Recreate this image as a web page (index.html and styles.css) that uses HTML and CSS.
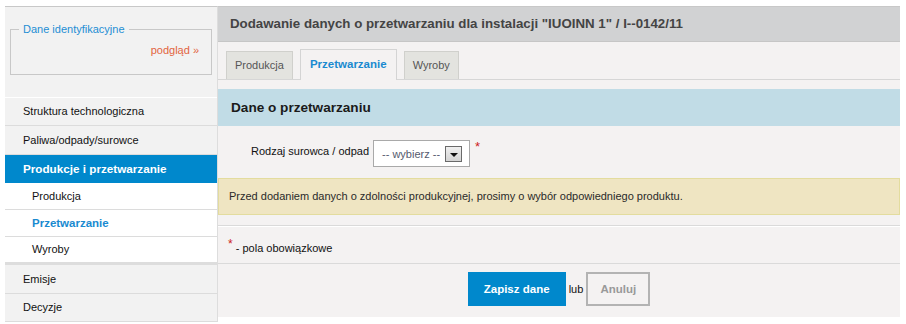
FILE: index.html
```html
<!DOCTYPE html>
<html lang="pl">
<head>
<meta charset="utf-8">
<title>Dodawanie danych o przetwarzaniu</title>
<link rel="stylesheet" href="styles.css">
</head>
<body>
<div class="page">
  <aside class="sidebar">
    <fieldset class="ident">
      <legend>Dane identyfikacyjne</legend>
      <div class="ident-link"><a href="#">podgląd »</a></div>
    </fieldset>
    <ul class="nav">
      <li class="nav-item">Struktura technologiczna</li>
      <li class="nav-item nav-tall">Paliwa/odpady/surowce</li>
      <li class="nav-item nav-active">Produkcje i przetwarzanie</li>
      <li class="nav-sub">Produkcja</li>
      <li class="nav-sub nav-sub-active">Przetwarzanie</li>
      <li class="nav-sub nav-sub-last">Wyroby</li>
      <li class="nav-item nav-tall">Emisje</li>
      <li class="nav-item">Decyzje</li>
    </ul>
  </aside>
  <main class="main">
    <h1 class="title">Dodawanie danych o przetwarzaniu dla instalacji "IUOINN 1" / I--0142/11</h1>
    <div class="tabs">
      <div class="tab">Produkcja</div>
      <div class="tab tab-active">Przetwarzanie</div>
      <div class="tab">Wyroby</div>
    </div>
    <h2 class="section">Dane o przetwarzaniu</h2>
    <div class="form-row">
      <label class="label">Rodzaj surowca / odpad</label>
      <div class="select">
        <span class="select-text">-- wybierz --</span>
        <span class="select-btn"><span class="tri"></span></span>
      </div>
      <span class="req">*</span>
    </div>
    <div class="notice">Przed dodaniem danych o zdolności produkcyjnej, prosimy o wybór odpowiedniego produktu.</div>
    <div class="legend-req"><span class="req-small">*</span> - pola obowiązkowe</div>
    <div class="actions">
      <button class="btn-primary" type="button">Zapisz dane</button>
      <span class="lub">lub</span>
      <button class="btn-cancel" type="button">Anuluj</button>
    </div>
  </main>
</div>
</body>
</html>
```
FILE: styles.css
```css
* { box-sizing: border-box; }
html, body {
  margin: 0;
  padding: 0;
  background: #ffffff;
  font-family: "Liberation Sans", Arial, sans-serif;
  font-size: 11px;
  color: #222;
}
.page {
  display: flex;
  align-items: flex-start;
  margin-top: 6px;
  padding-left: 5px;
}
.sidebar {
  width: 213px;
  background: #f2f2f2;
  border-top: 1px solid #c8c8c8;
  border-right: 1px solid #dddddd;
  padding-top: 16px;
  flex: none;
}
.ident {
  margin: 0 5px;
  border: 1px solid #c8c8c8;
  padding: 0 12px 0 8px;
  height: 52px;
}
.ident legend {
  color: #1e8ed4;
  font-size: 11px;
  padding: 0 4px;
  line-height: 13px;
}
.ident-link {
  text-align: right;
  margin-top: 8px;
  font-size: 11px;
}
.ident-link a {
  color: #e2643e;
  text-decoration: none;
}
.nav {
  list-style: none;
  margin: 22px 0 0 0;
  padding: 0;
  border-top: 1px solid #ffffff;
}
.nav-item {
  line-height: 27px;
  padding-left: 18px;
  border-bottom: 1px solid #dcdcdc;
  color: #111;
}
.nav-tall { line-height: 28px; }
.nav-active {
  background: #0088cc;
  color: #ffffff;
  font-weight: bold;
  font-size: 11.7px;
  border-bottom-color: #0088cc;
}
.nav-sub {
  background: #ffffff;
  line-height: 26px;
  padding-left: 27px;
  border-bottom: 1px solid #dcdcdc;
  color: #111;
}
.nav-sub-active {
  color: #1a8ad0;
  font-weight: bold;
  font-size: 11.5px;
}
.nav-sub-last {
  line-height: 25px;
  border-bottom: 3px solid #dddddd;
}
.main {
  width: 682px;
  flex: none;
  background: #f4f2f2;
  border-top: 1px solid #c8c8c8;
  padding-bottom: 11px;
}
.title {
  margin: 0;
  height: 35px;
  line-height: 34px;
  background: #d1d2d3;
  border-bottom: 1px solid #c6c6c6;
  padding-left: 12px;
  font-size: 13.3px;
  font-weight: bold;
  color: #444;
}
.tabs {
  display: flex;
  gap: 7px;
  padding: 7px 0 0 8px;
  height: 38px;
  align-items: flex-end;
  border-bottom: 1px solid #d6d6d6;
}
.tab {
  height: 28px;
  line-height: 27px;
  padding: 0 8px;
  background: #e3e3df;
  border: 1px solid #d0d0cc;
  border-bottom: none;
  color: #555;
  font-size: 11px;
}
.tab-active {
  height: 31px;
  line-height: 29px;
  margin-bottom: -1px;
  background: #f4f2f2;
  border-color: #d4d4d4;
  color: #1a8ad0;
  font-weight: bold;
  font-size: 11.5px;
  padding: 0 9px;
}
.section {
  margin: 9px 0 0 0;
  height: 37px;
  line-height: 37px;
  background: #c1dce6;
  padding-left: 13px;
  font-size: 13.6px;
  font-weight: bold;
  color: #1a1a1a;
}
.form-row {
  display: flex;
  align-items: flex-start;
  padding-top: 14px;
}
.label {
  width: 151px;
  text-align: right;
  line-height: 22px;
  color: #111;
}
.select {
  margin-left: 4px;
  width: 97px;
  height: 27px;
  border: 1px solid #a9a9a9;
  background: #ffffff;
  display: flex;
  align-items: center;
  padding-left: 8px;
}
.select-text {
  color: #555a6e;
  font-size: 11px;
}
.select-btn {
  margin-left: 5px;
  width: 17px;
  height: 16px;
  border: 1px solid #6a6a6a;
  background: linear-gradient(#f0f0f0, #d4d4d4);
  display: flex;
  align-items: center;
  justify-content: center;
  padding-top: 3px;
}
.tri {
  width: 0;
  height: 0;
  border-left: 4px solid transparent;
  border-right: 4px solid transparent;
  border-top: 4px solid #111;
}
.req {
  color: #cc2222;
  font-size: 13px;
  margin-left: 5px;
  line-height: 14px;
}
.notice {
  margin-top: 11px;
  height: 37px;
  line-height: 35px;
  background: #efe5c2;
  border: 1px solid #e3dc9e;
  padding-left: 10px;
  color: #2a2a2a;
}
.legend-req {
  margin-top: 10px;
  border-top: 1px solid #dadada;
  box-shadow: inset 0 1px 0 #ffffff;
  border-bottom: 1px solid #dadada;
  height: 39px;
  padding: 11px 0 0 10px;
  color: #111;
}
.req-small {
  color: #cc2222;
  font-size: 12px;
  vertical-align: 4px;
}
.actions {
  display: flex;
  justify-content: center;
  align-items: center;
  gap: 3px;
  padding-top: 8px;
}
.btn-primary {
  width: 98px;
  height: 34px;
  border: none;
  background: #0088cc;
  color: #ffffff;
  font-family: "Liberation Sans", Arial, sans-serif;
  font-weight: bold;
  font-size: 11.5px;
  padding: 0;
}
.lub {
  color: #111;
  font-size: 11px;
}
.btn-cancel {
  width: 64px;
  height: 34px;
  border: 2px solid #b3b3b3;
  background: #f4f2f2;
  color: #999;
  font-family: "Liberation Sans", Arial, sans-serif;
  font-weight: bold;
  font-size: 11.5px;
  padding: 0;
}
```
